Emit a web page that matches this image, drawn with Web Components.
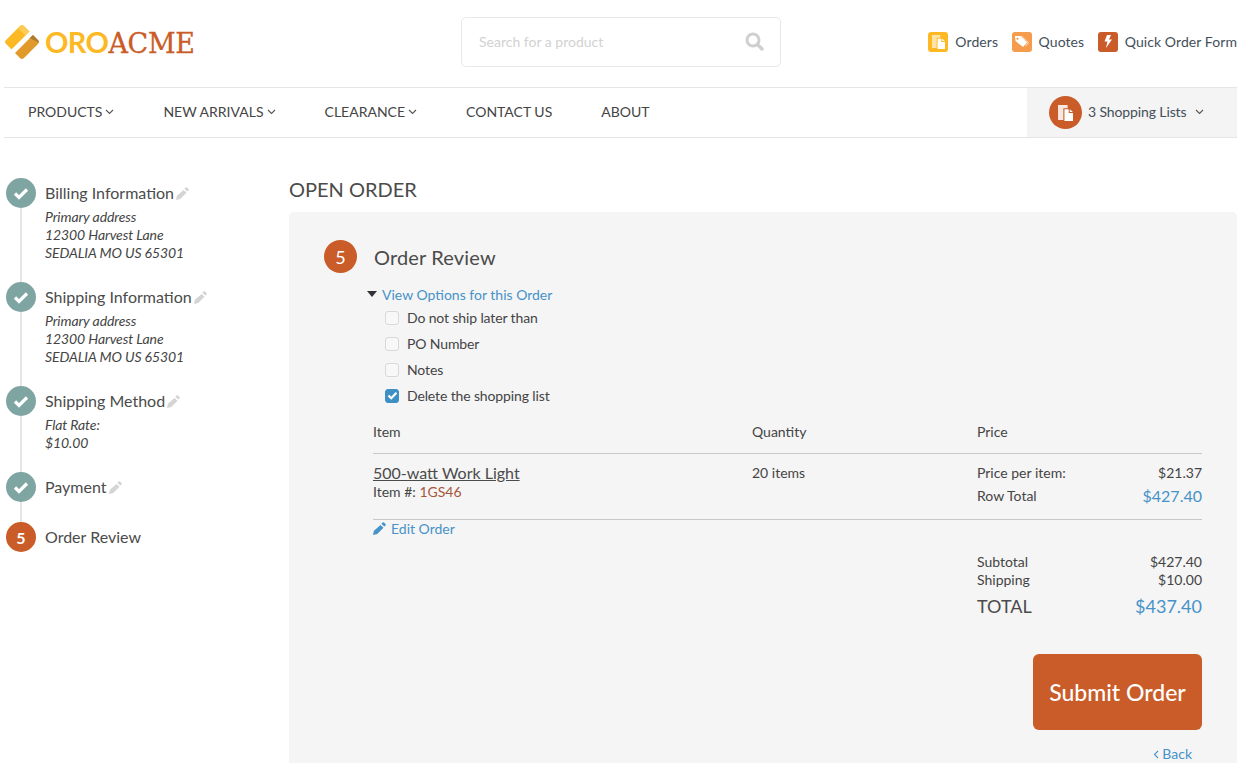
<!DOCTYPE html>
<html lang="en"><head><meta charset="utf-8"><title>Open Order</title>
<style>
html,body{margin:0;padding:0;background:#fff}
body{font-family:Lato,"Open Sans",sans-serif;font-size:14px;color:#444;height:763px;overflow:hidden}
</style></head><body>
<oro-app></oro-app>
<script>
const docIcon=(c='#fff',w=15,h=16,o=.85)=>`<svg width="${w}" height="${h}" viewBox="0 0 14 15"><path fill="${c}" opacity="${o}" d="M0 0h9v3H5v11H0z"/><path fill="${c}" d="M6 4h4v3.500h4V15H6zM11 4l3 2.500h-3z"/></svg>`;
const pencil=(c,cls='')=>`<svg class="${cls}" width="13" height="13" viewBox="0 0 13 13"><path fill="${c}" d="M9.600.5a1 1 0 0 1 1.400 0l1.500 1.500a1 1 0 0 1 0 1.400l-1.200 1.200-2.900-2.900zM7.600 2.900l2.900 2.900-6.300 6.300L0 13l.9-4.200z"/></svg>`;
function def(name,css,html){
  class E extends HTMLElement{
    constructor(){super();this.attachShadow({mode:'open'})}
    connectedCallback(){this.shadowRoot.innerHTML=`<style>${css}</style>`+(typeof html==='function'?html(this):html)}
  }
  customElements.define(name,E);
}
def('oro-logo',`:host{display:flex;align-items:center;gap:5px}
 .t{font-size:29px;line-height:36px;white-space:nowrap;display:flex;align-items:baseline;margin-top:3px}
 .a{color:#fdb924;font-family:Lato,sans-serif;font-weight:700;letter-spacing:-.6px}
 .b{color:#c95c28;font-family:"DejaVu Serif",serif;font-size:27px;letter-spacing:-.35px;-webkit-text-stroke:.3px #c95c28}`,
 `<svg width="36" height="36" viewBox="-18 -18 36 36"><defs><clipPath id="k"><rect x="-12.800" y="-12.800" width="25.600" height="25.600" rx="3"/></clipPath></defs><g transform="rotate(-45)" clip-path="url(#k)"><rect x="-13" y="-13" width="26" height="11" fill="#fdb924"/><rect x="7" y="-13" width="6" height="11" fill="#fdcb57"/><rect x="-13" y="-2" width="26" height="4.800" fill="#fff"/><rect x="-13" y="2.800" width="26" height="10.200" fill="#e19a2a"/><path d="M8 2.800h5v10.200h-1z" fill="#ad7c2e"/></g></svg><span class="t"><span class="a">ORO</span><span class="b">ACME</span></span>`);
def('oro-search',`:host{display:flex;box-sizing:border-box;width:320px;height:50px;border:1px solid #e8e8e8;border-radius:5px;align-items:center;justify-content:space-between;padding:0 16px 0 17px;background:#fff}
 span{color:#d2d2d2;font-size:14px}`,
 `<span>Search for a product</span><svg width="19" height="19" viewBox="0 0 19 19"><circle cx="8" cy="8" r="6" fill="none" stroke="#cfcfcf" stroke-width="3"/><path d="M12.500 12.500 17 17" stroke="#cfcfcf" stroke-width="3.400" stroke-linecap="round"/></svg>`);
def('oro-quick',`:host{display:flex;align-items:center;gap:7px;color:#444f5a;font-size:14px;white-space:nowrap;letter-spacing:.08px}
 i{display:flex;width:20px;height:20px;border-radius:3px;align-items:center;justify-content:center;background:var(--c)}`,
 h=>{const k=h.getAttribute('icon');return `<i style="--c:${h.getAttribute('color')}">${k==='tag'?`<svg width="16" height="14" viewBox="0 0 16 14"><path fill="#fff" opacity=".55" d="M6 1h2l7 6.500-3 4-1-.5 2.500-3.500z"/><path fill="#fff" d="M1 1h5.500l6.500 6.500-4 4.500L1.500 6zM3.500 2.700a1 1 0 1 0 .01 0z" fill-rule="evenodd"/></svg>`:k==='bolt'?`<svg width="8" height="13" viewBox="0 0 8 13"><path fill="#fff" d="M3 0h4L5 4.500h3L2 13l1.400-6.500H.5z"/></svg>`:docIcon('#fff',13,14,.6)}</i><span><slot></slot></span>`});
def('oro-nav-item',`:host{display:flex;align-items:center;gap:3px;color:#444;font-size:14px;white-space:nowrap;text-transform:uppercase}
 svg{margin-top:1px}`,
 h=>`<slot></slot>${h.hasAttribute('caret')?`<svg width="9" height="6" viewBox="0 0 9 6"><path d="M1 1l3.500 3.500L8 1" fill="none" stroke="#555" stroke-width="1.100"/></svg>`:''}`);
def('oro-header',`:host{display:flex;align-items:center;height:87px;box-sizing:border-box;padding-bottom:4px}
 .l{width:457px;display:flex;align-items:center}
 .r{margin-left:auto;display:flex;gap:13.500px}`,
 `<div class="l"><oro-logo></oro-logo></div><oro-search></oro-search><div class="r"><oro-quick color="#fdb924" icon="doc">Orders</oro-quick><oro-quick color="#f59c4d" icon="tag">Quotes</oro-quick><oro-quick color="#c95c28" icon="bolt">Quick Order Form</oro-quick></div>`);
def('oro-nav',`:host{display:flex;height:51px;box-sizing:border-box;border-top:1px solid #e5e5e5;border-bottom:1px solid #e5e5e5;align-items:stretch}
 .m{display:flex;align-items:center;gap:49px;padding:0 0 2px 24px;flex:1}
 .c{width:210px;background:#f4f4f4;display:flex;align-items:center;padding-left:22px;box-sizing:border-box;gap:6px;font-size:14px;color:#444f5a;white-space:nowrap;letter-spacing:-.12px}
 .o{width:33px;height:33px;border-radius:50%;background:#c95c28;display:flex;align-items:center;justify-content:center}
 .x{margin-top:-2px}
 .c svg.d{margin-left:3px;margin-top:-2px}`,
 `<div class="m"><oro-nav-item caret>Products</oro-nav-item><oro-nav-item caret>New Arrivals</oro-nav-item><oro-nav-item caret>Clearance</oro-nav-item><oro-nav-item>Contact Us</oro-nav-item><oro-nav-item>About</oro-nav-item></div><div class="c"><span class="o">${docIcon()}</span><span class="x">3 Shopping Lists</span><svg class="d" width="9" height="6" viewBox="0 0 9 6"><path d="M1 1l3.500 3.500L8 1" fill="none" stroke="#555" stroke-width="1.100"/></svg></div>`);
def('oro-step',`:host{display:grid;grid-template-columns:30px 1fr;grid-template-rows:30px auto;align-content:start;column-gap:9px;position:relative;color:#444}
 .n{width:30px;height:30px;border-radius:50%;background:var(--bg,#7fa5a3);display:flex;align-items:center;justify-content:center;color:#fff;font-weight:700;font-size:16px;position:relative;z-index:1}
 .line{position:absolute;left:14px;top:30px;bottom:0;width:2px;background:#e5e5e5}
 .t{font-size:16px;line-height:30px;display:flex;align-items:center;gap:2px;white-space:nowrap;color:#4b4b4b}
 .d{grid-column:2;font-style:italic;font-size:14px;line-height:18px;white-space:nowrap;letter-spacing:-.1px}
 svg.p{margin-top:1px}`,
 h=>{const cur=h.hasAttribute('current');return `${h.hasAttribute('last')?'':'<div class="line"></div>'}<div class="n" style="${cur?'--bg:#c95c28':''}">${cur?'5':`<svg width="16" height="13" viewBox="0 0 16 13"><path d="M2 6.500l4 4L14 2.500" fill="none" stroke="#fff" stroke-width="3.200"/></svg>`}</div><div class="t">${h.getAttribute('label')}${cur?'':pencil('#d4d4d4','p')}</div><div class="d"><slot></slot></div>`});
def('oro-check',`:host{display:flex;align-items:center;gap:8px;height:26px;font-size:14px;color:#444;letter-spacing:-.13px}
 i{box-sizing:border-box;width:14px;height:14px;margin-top:1px;border:1.500px solid #d8d8d8;border-radius:3px;background:#f8f8f8;display:flex;align-items:center;justify-content:center}
 i.on{background:#3d8fc4;border-color:#3d8fc4}`,
 h=>`<i class="${h.hasAttribute('checked')?'on':''}">${h.hasAttribute('checked')?`<svg width="11" height="9" viewBox="0 0 11 9"><path d="M1.500 4.500l2.700 2.700L9.500 1.800" fill="none" stroke="#fff" stroke-width="2.200"/></svg>`:''}</i><span><slot></slot></span>`);
def('oro-review',`:host{display:block;background:#f5f5f5;border-radius:5px 5px 0 0;padding:28px 35px 0 35px;height:551px;box-sizing:border-box;color:#444;font-size:14px}
 .head{display:flex;align-items:center;gap:17px;height:33px}
 .num{width:33px;height:33px;border-radius:50%;background:#c95c28;color:#fff;display:flex;align-items:center;justify-content:center;font-size:18px}
 h2{margin:0;font-weight:400;font-size:20px;color:#4b4b4b;letter-spacing:.15px}
 .body{margin-left:49px}
 .view{display:flex;align-items:center;gap:5px;margin-top:11px;height:20px;color:#4792c8;margin-left:-6px}
 .view svg{margin-top:-1px}
 .opts{margin:0 0 0 12px}
 .g{display:grid;grid-template-columns:379px 225px 1fr}
 .gh{align-items:center;border-bottom:1px solid #c8c8c8;margin-top:1px;box-sizing:border-box;height:45px}
 .gr{border-bottom:1px solid #c8c8c8;height:66px;padding-top:9px;box-sizing:border-box}
 .name{font-size:16px;text-decoration:underline;line-height:20px;color:#4b4b4b}
 .sku{line-height:18px}.sku b{font-weight:400;color:#a5553a}
 .kv{display:flex;justify-content:space-between;align-items:center;line-height:20px}
 .kv+.kv{margin-top:3px}
 .blue{color:#4792c8;font-size:16px}
 .edit{display:flex;align-items:center;gap:5px;color:#4792c8;height:18px;margin-top:-1px}
 .tot{margin-left:604px;margin-top:16px}
 .tot .s{display:flex;justify-content:space-between;line-height:18px}
 .tot .T{display:flex;justify-content:space-between;align-items:center;font-size:18px;margin-top:4px;line-height:26px;color:#4b4b4b}
 .tot .T span:last-child{color:#4792c8}
 .btnw{display:flex;justify-content:flex-end;margin-top:35px}
 button{width:169px;height:76px;background:#c95c28;color:#fff;border:0;border-radius:6px;font:500 23px Lato,sans-serif;padding:0}
 .back{display:flex;justify-content:flex-end;align-items:center;gap:3px;color:#4792c8;margin-top:15px;margin-right:10px;line-height:18px}`,
 `<div class="head"><span class="num">5</span><h2>Order Review</h2></div>
 <div class="body">
 <div class="view"><svg width="10" height="6" viewBox="0 0 10 6"><path d="M0 0h10L5 6z" fill="#333"/></svg><span>View Options for this Order</span></div>
 <div class="opts"><oro-check>Do not ship later than</oro-check><oro-check>PO Number</oro-check><oro-check>Notes</oro-check><oro-check checked>Delete the shopping list</oro-check></div>
 <div class="g gh"><span>Item</span><span>Quantity</span><span>Price</span></div>
 <div class="g gr"><div><div class="name">500-watt Work Light</div><div class="sku">Item #: <b>1GS46</b></div></div><div style="line-height:20px">20 items</div><div><div class="kv"><span>Price per item:</span><span>$21.37</span></div><div class="kv"><span>Row Total</span><span class="blue">$427.40</span></div></div></div>
 <div class="edit">${pencil('#4792c8')}<span>Edit Order</span></div>
 <div class="tot"><div class="s"><span>Subtotal</span><span>$427.40</span></div><div class="s"><span>Shipping</span><span>$10.00</span></div><div class="T"><span>TOTAL</span><span>$437.40</span></div></div>
 <div class="btnw"><button>Submit Order</button></div>
 <div class="back"><svg width="6" height="9" viewBox="0 0 6 9"><path d="M5 1L1.500 4.500 5 8" fill="none" stroke="#4792c8" stroke-width="1.100"/></svg><span>Back</span></div>
 </div>`);
def('oro-app',`:host{display:block;padding:0 7px 0 4px;width:1244px;box-sizing:border-box}
 .main{display:grid;grid-template-columns:285px 1fr}
 aside{padding:40px 0 0 2px;display:flex;flex-direction:column}
 oro-step.a{height:104px}
 oro-step.b{height:86px}
 oro-step.c{height:50px}
 h1{margin:40px 0 10px;font-weight:400;font-size:20px;line-height:23px;padding-bottom:1px;color:#4b4b4b;text-transform:uppercase}`,
 `<oro-header></oro-header><oro-nav></oro-nav>
 <div class="main"><aside>
 <oro-step class="a" label="Billing Information">Primary address<br>12300 Harvest Lane<br>SEDALIA MO US 65301</oro-step>
 <oro-step class="a" label="Shipping Information">Primary address<br>12300 Harvest Lane<br>SEDALIA MO US 65301</oro-step>
 <oro-step class="b" label="Shipping Method">Flat Rate:<br>$10.00</oro-step>
 <oro-step class="c" label="Payment"></oro-step>
 <oro-step last current label="Order Review"></oro-step>
 </aside><section><h1>Open Order</h1><oro-review></oro-review></section></div>`);
</script>
</body></html>
